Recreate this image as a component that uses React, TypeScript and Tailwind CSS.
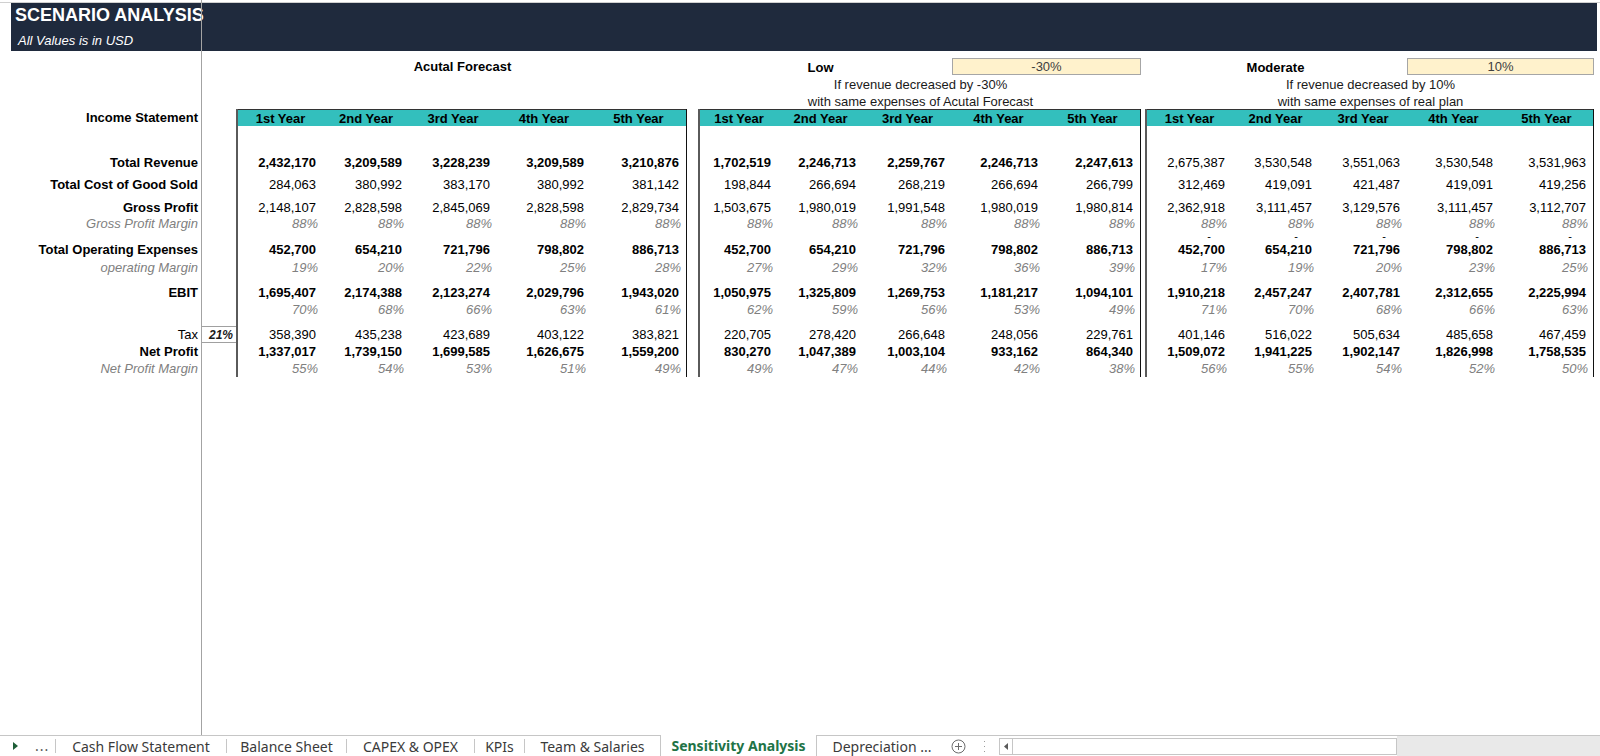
import React from "react";

type Kind = "b" | "n" | "p" | "d" | "";
type RowKey =
  | "sp"
  | "rev"
  | "cogs"
  | "gp"
  | "gpm"
  | "dash"
  | "opex"
  | "opm"
  | "ebit"
  | "ebitm"
  | "tax"
  | "np"
  | "npm";

const ROWS: { key: RowKey; h: string; label?: string; kind?: Kind }[] = [
  { key: "sp", h: "h-[25px]" },
  { key: "rev", h: "h-[20px]", label: "Total Revenue", kind: "b" },
  { key: "cogs", h: "h-[22px]", label: "Total Cost of Good Sold", kind: "b" },
  { key: "gp", h: "h-[23px]", label: "Gross Profit", kind: "b" },
  { key: "gpm", h: "h-[16px]", label: "Gross Profit Margin", kind: "p" },
  { key: "dash", h: "h-[10px]" },
  { key: "opex", h: "h-[16px]", label: "Total Operating Expenses", kind: "b" },
  { key: "opm", h: "h-[18px]", label: "operating Margin", kind: "p" },
  { key: "ebit", h: "h-[25px]", label: "EBIT", kind: "b" },
  { key: "ebitm", h: "h-[17px]" },
  { key: "tax", h: "h-[25px]", label: "Tax", kind: "n" },
  { key: "np", h: "h-[17px]", label: "Net Profit", kind: "b" },
  { key: "npm", h: "h-[17px]", label: "Net Profit Margin", kind: "p" },
];

const KIND: Record<Exclude<RowKey, "sp">, Kind> = {
  rev: "b",
  cogs: "n",
  gp: "n",
  gpm: "p",
  dash: "d",
  opex: "b",
  opm: "p",
  ebit: "b",
  ebitm: "p",
  tax: "n",
  np: "b",
  npm: "p",
};

const cellText: Record<Kind, string> = {
  b: "items-end pb-[1px] text-[13px] leading-[15px] font-bold text-black pr-[7px]",
  n: "items-end pb-[1px] text-[13px] leading-[15px] text-black pr-[7px]",
  p: "items-end pb-[1px] text-[13px] leading-[15px] italic text-[#808080] pr-[5px]",
  d: "items-start text-[11px] leading-[8px] text-black pr-[21px]",
  "": "",
};

const labelText: Record<Kind, string> = {
  b: "font-bold text-black",
  n: "text-black",
  p: "italic text-[#808080]",
  d: "",
  "": "",
};

type TableDef = {
  title: string;
  box?: string;
  line1?: string;
  line2?: string;
  width: string;
  cols: string[];
  revKind: Kind;
  data: Partial<Record<RowKey, string[]>>;
};

const YEARS = ["1st Year", "2nd Year", "3rd Year", "4th Year", "5th Year"];

const TABLES: TableDef[] = [
  {
    title: "Acutal Forecast",
    width: "w-[451px]",
    cols: ["w-[85px]", "w-[86px]", "w-[88px]", "w-[94px]", "w-[95px]"],
    revKind: "b",
    data: {
      rev: ["2,432,170", "3,209,589", "3,228,239", "3,209,589", "3,210,876"],
      cogs: ["284,063", "380,992", "383,170", "380,992", "381,142"],
      gp: ["2,148,107", "2,828,598", "2,845,069", "2,828,598", "2,829,734"],
      gpm: ["88%", "88%", "88%", "88%", "88%"],
      opex: ["452,700", "654,210", "721,796", "798,802", "886,713"],
      opm: ["19%", "20%", "22%", "25%", "28%"],
      ebit: ["1,695,407", "2,174,388", "2,123,274", "2,029,796", "1,943,020"],
      ebitm: ["70%", "68%", "66%", "63%", "61%"],
      tax: ["358,390", "435,238", "423,689", "403,122", "383,821"],
      np: ["1,337,017", "1,739,150", "1,699,585", "1,626,675", "1,559,200"],
      npm: ["55%", "54%", "53%", "51%", "49%"],
    },
  },
  {
    title: "Low",
    box: "-30%",
    line1: "If revenue decreased by -30%",
    line2: "with same expenses of Acutal Forecast",
    width: "w-[443px]",
    cols: ["w-[78px]", "w-[85px]", "w-[89px]", "w-[93px]", "w-[95px]"],
    revKind: "b",
    data: {
      rev: ["1,702,519", "2,246,713", "2,259,767", "2,246,713", "2,247,613"],
      cogs: ["198,844", "266,694", "268,219", "266,694", "266,799"],
      gp: ["1,503,675", "1,980,019", "1,991,548", "1,980,019", "1,980,814"],
      gpm: ["88%", "88%", "88%", "88%", "88%"],
      opex: ["452,700", "654,210", "721,796", "798,802", "886,713"],
      opm: ["27%", "29%", "32%", "36%", "39%"],
      ebit: ["1,050,975", "1,325,809", "1,269,753", "1,181,217", "1,094,101"],
      ebitm: ["62%", "59%", "56%", "53%", "49%"],
      tax: ["220,705", "278,420", "266,648", "248,056", "229,761"],
      np: ["830,270", "1,047,389", "1,003,104", "933,162", "864,340"],
      npm: ["49%", "47%", "44%", "42%", "38%"],
    },
  },
  {
    title: "Moderate",
    box: "10%",
    line1: "If revenue decreased by 10%",
    line2: "with same expenses of real plan",
    width: "w-[449px]",
    cols: ["w-[85px]", "w-[87px]", "w-[88px]", "w-[93px]", "w-[93px]"],
    revKind: "n",
    data: {
      rev: ["2,675,387", "3,530,548", "3,551,063", "3,530,548", "3,531,963"],
      cogs: ["312,469", "419,091", "421,487", "419,091", "419,256"],
      gp: ["2,362,918", "3,111,457", "3,129,576", "3,111,457", "3,112,707"],
      gpm: ["88%", "88%", "88%", "88%", "88%"],
      dash: ["-", "-", "-", "-", "-"],
      opex: ["452,700", "654,210", "721,796", "798,802", "886,713"],
      opm: ["17%", "19%", "20%", "23%", "25%"],
      ebit: ["1,910,218", "2,457,247", "2,407,781", "2,312,655", "2,225,994"],
      ebitm: ["71%", "70%", "68%", "66%", "63%"],
      tax: ["401,146", "516,022", "505,634", "485,658", "467,459"],
      np: ["1,509,072", "1,941,225", "1,902,147", "1,826,998", "1,758,535"],
      npm: ["56%", "55%", "54%", "52%", "50%"],
    },
  },
];

const ScenarioTable = ({ t }: { t: TableDef }) => {
  return (
    <div className={`flex flex-col ${t.width}`}>
      {/* scenario heading */}
      <div className="h-[58px] flex flex-col pl-[2px] text-[13px] leading-[15px] text-[#1a1a1a]">
        {t.box ? (
          <div className="h-[25px] pt-[7px] flex">
            <div className={t.cols[0]} />
            <div className={`${t.cols[1]} flex items-center justify-center font-bold text-black`}>
              {t.title}
            </div>
            <div className={t.cols[2]} />
            <div className="flex-1 h-[17px] bg-[#fff2cc] border border-[#a6a6a6] flex items-center justify-center text-[#404040]">
              {t.box}
            </div>
          </div>
        ) : (
          <div className="h-[25px] pt-[7px] flex">
            <div className="flex-1 h-[17px] flex items-center justify-center font-bold text-black">
              {t.title}
            </div>
          </div>
        )}
        <div className="h-[17px] flex items-center justify-center">{t.line1}</div>
        <div className="h-[16px] flex items-center justify-center">{t.line2}</div>
      </div>

      {/* bordered table */}
      <div className="border-l-2 border-l-[#5a5a5a] border-r border-r-[#111]">
        <div className="h-[17px] flex bg-[#33bfbd] border-t border-t-[#333]">
          {YEARS.map((y, i) => (
            <div
              key={y}
              className={`${t.cols[i]} flex items-center justify-center font-bold text-[13px] text-black leading-[15px]`}
            >
              {y}
            </div>
          ))}
        </div>
        {ROWS.map((r) => {
          const vals = t.data[r.key];
          const kind: Kind =
            r.key === "sp" ? "" : r.key === "rev" ? t.revKind : KIND[r.key];
          return (
            <div key={r.key} className={`${r.h} flex`}>
              {t.cols.map((w, i) => (
                <div
                  key={i}
                  className={`${w} flex justify-end whitespace-nowrap ${cellText[kind]}`}
                >
                  {vals ? vals[i] : ""}
                </div>
              ))}
            </div>
          );
        })}
      </div>
    </div>
  );
};

const TABS = [
  { name: "Cash Flow Statement", w: "w-[170px]" },
  { name: "Balance Sheet", w: "w-[119px]" },
  { name: "CAPEX & OPEX", w: "w-[127px]" },
  { name: "KPIs", w: "w-[49px]" },
  { name: "Team & Salaries", w: "w-[135px]" },
];

const SheetTabs = () => (
  <div className="h-[21px] flex items-stretch border-t border-[#c6c6c6] bg-white font-['Noto_Sans',sans-serif] text-[14px] text-[#3a3a3a]">
    <div className="w-[55px] flex items-center">
      <svg className="ml-[13px]" width="5" height="8" viewBox="0 0 5 8">
        <path d="M0 0 L5 4 L0 8Z" fill="#1e5e37" />
      </svg>
      <span className="ml-[17px] leading-none text-[#555] tracking-[1px]">...</span>
    </div>
    {TABS.map((t) => (
      <React.Fragment key={t.name}>
        <div className="w-px bg-[#c6c6c6] my-[3px]" />
        <div className={`${t.w} flex items-center justify-center whitespace-nowrap`}>{t.name}</div>
      </React.Fragment>
    ))}
    <div className="w-[157px] -mt-px flex items-center justify-center bg-white border-x border-[#c6c6c6] font-bold text-[#217346] whitespace-nowrap">
      Sensitivity Analysis
    </div>
    <div className="w-[130px] flex items-center justify-center whitespace-nowrap">Depreciation ...</div>
    <div className="w-[23px] flex items-center justify-center">
      <svg width="15" height="15" viewBox="0 0 15 15">
        <circle cx="7.5" cy="7.5" r="6.5" fill="none" stroke="#6b6b6b" strokeWidth="1" />
        <path d="M7.5 4 V11 M4 7.5 H11" stroke="#6b6b6b" strokeWidth="1" />
      </svg>
    </div>
    <div className="w-[29px] flex items-center justify-center">
      <svg width="3" height="11" viewBox="0 0 3 11">
        <rect x="1" y="0" width="1" height="1" fill="#9a9a9a" />
        <rect x="1" y="5" width="1" height="1" fill="#9a9a9a" />
        <rect x="1" y="10" width="1" height="1" fill="#9a9a9a" />
      </svg>
    </div>
    <div className="flex items-center">
      <div className="h-[17px] w-[14px] border border-[#c6c6c6] flex items-center justify-center">
        <svg width="4" height="7" viewBox="0 0 4 7">
          <path d="M4 0 L0 3.5 L4 7Z" fill="#5a5a5a" />
        </svg>
      </div>
      <div className="h-[17px] w-[384px] border border-l-0 border-[#c6c6c6] bg-white" />
    </div>
    <div className="flex-1 bg-[#e9e9e9]" />
  </div>
);

export default function App() {
  return (
    <div className="relative w-[1600px] h-[756px] overflow-hidden bg-white flex flex-col font-['Liberation_Sans',Arial,sans-serif]">
      <div className="flex-1 flex flex-col">
        <div className="h-[3px] border-b border-[#d0d0d0]" />

        {/* banner */}
        <div className="ml-[11px] mr-[3px] h-[48px] bg-[#1f2a3d] flex flex-col">
          <div className="mt-[2px] pl-[4px] text-[18px] leading-[20px] font-bold text-white">
            SCENARIO ANALYSIS
          </div>
          <div className="mt-[8px] pl-[7px] text-[13px] leading-[15px] italic text-white">
            All Values is in USD
          </div>
        </div>

        <div className="flex">
          {/* row labels */}
          <div className="w-[201px] flex flex-col">
            <div className="h-[58px]" />
            <div className="h-[17px] flex items-center justify-end pr-[3px] font-bold text-[13px] leading-[15px] text-black">
              Income Statement
            </div>
            {ROWS.map((r) => (
              <div
                key={r.key}
                className={`${r.h} flex items-end justify-end pb-[1px] pr-[3px] text-[13px] leading-[15px] whitespace-nowrap ${labelText[r.kind ?? ""]}`}
              >
                {r.label ?? ""}
              </div>
            ))}
          </div>

          {/* tax rate column */}
          <div className="w-[35px] flex flex-col">
            <div className="h-[75px]" />
            {ROWS.map((r) => (
              <div key={r.key} className={`${r.h} flex items-end`}>
                {r.key === "tax" ? (
                  <div className="w-full h-[17px] border-y border-[#a0a0a0] flex items-center justify-end pr-[3px] text-[12px] font-bold italic text-[#1a1a1a]">
                    21%
                  </div>
                ) : null}
              </div>
            ))}
          </div>

          <ScenarioTable t={TABLES[0]} />
          <div className="w-[11px]" />
          <ScenarioTable t={TABLES[1]} />
          <div className="w-[4px]" />
          <ScenarioTable t={TABLES[2]} />
        </div>
      </div>

      <SheetTabs />

      {/* frozen pane divider */}
      <div className="absolute left-[201px] top-0 bottom-[21px] w-px bg-[#a3a3a3]" />
    </div>
  );
}
